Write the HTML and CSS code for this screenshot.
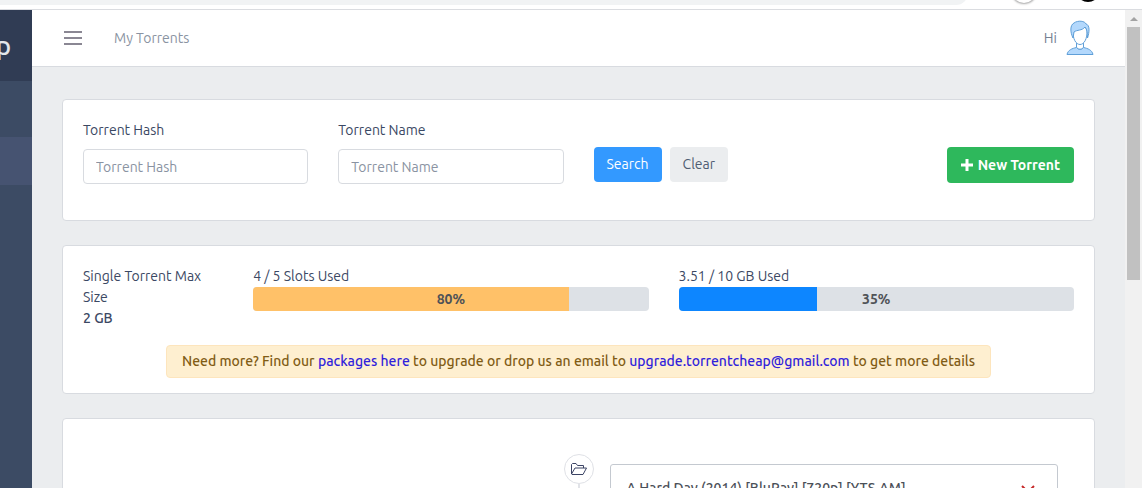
FILE: index.html
```html
<!DOCTYPE html>
<html lang="en">

<head>
  <meta charset="UTF-8">
  <meta name="viewport" content="width=device-width, initial-scale=1.0">
  <title>My Torrents</title>
  <link rel="stylesheet" href="styles.css">
</head>

<body>
  <div class="toolbar">
    <div class="address"></div>
    <div class="tool tool-light"></div>
    <div class="tool tool-dark"></div>
  </div>

  <div class="app">
    <nav class="sidebar">
      <div class="brand">p</div>
      <ul class="menu">
        <li class="title"></li>
        <li class="active"></li>
      </ul>
    </nav>

    <div class="page">
      <header class="header">
        <button type="button" class="toggler" aria-label="Toggle menu">
          <svg width="18" height="14" viewBox="0 0 18 14">
            <path d="M0 1h18M0 7h18M0 13h18" stroke="#8a8793" stroke-width="2" />
          </svg>
        </button>
        <a href="#" class="nav-link">My Torrents</a>
        <a href="#" class="user">
          <span>Hi</span>
          <svg width="28" height="36" viewBox="0 0 28 36">
            <path d="M1 34.500C2 30 6 28.500 10.500 27.500Q14 31 17.500 27.500C22 28.500 26 30 27 34.500Z" fill="#b3d8fc" stroke="#5f9fd8" />
            <path d="M10.500 23v4.500Q14 31 17.500 27.500V23" fill="#fff" stroke="#5f9fd8" />
            <path d="M7 10C6.500 19 10 24.500 14 24.500S21.500 19 21 10L19 7H9Z" fill="#fff" stroke="#5f9fd8" />
            <path d="M7 18C4 12 4 5 8 3C12 0 19 1 20 4C24 5 23.500 12 21.500 18C21.500 13 21 9 19 7C16 11 11 9.500 8 12Z" fill="#b3d8fc" stroke="#5f9fd8" />
          </svg>
        </a>
      </header>

      <main class="content">
        <form class="card row">
          <div class="col-3">
            <label for="hash">Torrent Hash</label>
            <input type="text" id="hash" class="form-control" placeholder="Torrent Hash">
          </div>
          <div class="col-3">
            <label for="name">Torrent Name</label>
            <input type="text" id="name" class="form-control" placeholder="Torrent Name">
          </div>
          <div class="col-6 actions">
            <button type="button" class="btn btn-primary">Search</button>
            <button type="reset" class="btn btn-secondary">Clear</button>
            <button type="button" class="btn btn-success">
              <svg width="12" height="12" viewBox="0 0 12 12">
                <path d="M6 0v12M0 6h12" stroke="#fff" stroke-width="3" />
              </svg>
              New Torrent
            </button>
          </div>
        </form>

        <section class="card usage">
          <div class="row">
            <div class="col-2">
              Single Torrent Max Size<br>
              <span class="medium">2 GB</span>
            </div>
            <div class="col-5">
              <div>4 / 5 Slots Used</div>
              <div class="progress">
                <div class="bar bar-warning" style="width: 80%"></div>
                <b class="percent">80%</b>
              </div>
            </div>
            <div class="col-5">
              <div>3.51 / 10 GB Used</div>
              <div class="progress">
                <div class="bar bar-info" style="width: 35%"></div>
                <b class="percent">35%</b>
              </div>
            </div>
          </div>
          <div class="alert">
            Need more? Find our <a href="#">packages here</a> to upgrade or drop us an email to
            <a href="#">upgrade.torrentcheap@gmail.com</a> to get more details
          </div>
        </section>

        <section class="card timeline">
          <div class="marker">
            <div class="marker-icon">
              <svg width="16" height="12" viewBox="0 0 16 12" fill="none" stroke="#3c4465" stroke-linejoin="round">
                <path d="M.500 11V1.500L1.500.500H5L6.500 2.500H12.500V5" />
                <path d="M.500 11L4 5H15.500L12 11.500H1Z" />
              </svg>
            </div>
          </div>
          <article class="torrent">
            <span>A Hard Day (2014) [BluRay] [720p] [YTS.AM]</span>
            <button type="button" class="remove" aria-label="Remove">
              <svg width="14" height="14" viewBox="0 0 14 14">
                <path d="M1 1l12 12M13 1L1 13" stroke="#c62828" stroke-width="2" />
              </svg>
            </button>
          </article>
        </section>
      </main>
    </div>

    <div class="scrollbar">
      <div class="arrow"></div>
      <div class="thumb"></div>
    </div>
  </div>
</body>

</html>
```
FILE: styles.css
```css
* {
  box-sizing: border-box;
}

body {
  margin: 0;
  height: 100vh;
  display: flex;
  flex-direction: column;
  overflow: hidden;
  font-family: Ubuntu, "Noto Sans", sans-serif;
  font-size: 14px;
  line-height: 21px;
  color: #3b4863;
  background: #fff;
}

a {
  text-decoration: none;
}

svg {
  display: block;
  flex: none;
}

button,
input {
  font: inherit;
}

ul {
  list-style: none;
  margin: 0;
  padding: 0;
}

/* browser toolbar */

.toolbar {
  flex: none;
  display: flex;
  align-items: flex-end;
  height: 10px;
  padding-right: 42px;
  border-bottom: 1px solid #dadce0;
  overflow: hidden;
}

.address {
  flex: 1;
  height: 24px;
  margin-bottom: 4px;
  border-radius: 0 0 12px 0;
  background: #f1f3f4;
}

.tool {
  flex: none;
  width: 24px;
  height: 24px;
  border-radius: 50%;
}

.tool-light {
  margin: 0 40px 6px 44px;
  background: #fff;
  box-shadow: 0 0 2px 1px #aaa;
}

.tool-dark {
  margin-bottom: 7px;
  background: #000;
}

.app {
  flex: 1;
  display: flex;
  min-height: 0;
}

/* sidebar */

.sidebar {
  flex: none;
  width: 32px;
  background: #3c4b64;
}

.brand {
  display: flex;
  align-items: center;
  justify-content: flex-end;
  height: 71px;
  padding-right: 21px;
  font-size: 26px;
  font-weight: 500;
  color: #e4e7ea;
  background: #303c54;
}

.menu .title {
  height: 56px;
}

.menu .active {
  height: 48px;
  background: #465371;
}

/* header */

.page {
  flex: 1;
  min-width: 0;
  overflow: hidden;
  background: #ebedef;
}

.header {
  display: flex;
  align-items: center;
  height: 57px;
  padding: 0 31px 0 32px;
  border-bottom: 1px solid #d8dbe0;
  background: #fff;
}

.toggler {
  padding: 0;
  border: 0;
  background: none;
}

.nav-link {
  margin-left: 32px;
  color: #8a93a2;
}

.user {
  display: flex;
  align-items: center;
  gap: 9px;
  margin-left: auto;
  color: #768192;
}

/* cards */

.content {
  display: flex;
  flex-direction: column;
  gap: 24px;
  padding: 32px 30px;
}

.card {
  padding: 20px;
  border: 1px solid #d8dbe0;
  border-radius: 4px;
  background: #fff;
}

.row {
  display: grid;
  grid-template-columns: repeat(12, 1fr);
  column-gap: 30px;
}

.col-2 {
  grid-column: span 2;
}

.col-3 {
  grid-column: span 3;
}

.col-5 {
  grid-column: span 5;
}

.col-6 {
  grid-column: span 6;
}

form.card {
  padding-bottom: 36px;
}

label {
  display: block;
  margin-bottom: 8px;
}

.form-control {
  display: block;
  width: 100%;
  height: 35px;
  padding: 6px 12px;
  border: 1px solid #d8dbe0;
  border-radius: 4px;
  color: #768192;
}

.form-control::placeholder {
  color: #8a93a2;
}

.actions {
  display: flex;
  align-items: flex-start;
  gap: 8px;
  padding-top: 27px;
}

.btn {
  display: flex;
  align-items: center;
  gap: 5px;
  height: 35px;
  padding: 0 13px;
  border: 0;
  border-radius: 4px;
  white-space: nowrap;
}

.btn-primary {
  color: #fff;
  background: #39f;
}

.btn-secondary {
  color: #4f5d73;
  background: #ebedef;
}

.btn-success {
  height: 36px;
  padding: 0 14px;
  margin-left: auto;
  font-weight: 700;
  color: #fff;
  background: #2eb85c;
}

.medium {
  font-weight: 500;
}

.progress {
  position: relative;
  height: 24px;
  border-radius: 4px;
  overflow: hidden;
  background: #dde1e6;
}

.bar {
  height: 100%;
}

.bar-warning {
  background: #ffc168;
}

.bar-info {
  background: #0d86ff;
}

.percent {
  position: absolute;
  inset: 0;
  line-height: 24px;
  text-align: center;
  color: #4f5257;
}

.usage {
  padding-bottom: 15px;
}

.alert {
  width: calc(100% * 10 / 12);
  margin: 16px auto 0;
  padding: 5px 0;
  border: 1px solid #fde5bd;
  border-radius: 4px;
  text-align: center;
  font-weight: 500;
  color: #815c15;
  background: #feefd0;
}

.alert a {
  color: #321fdb;
}

/* timeline */

.timeline {
  display: grid;
  grid-template-columns: 1fr 30px 1fr;
  column-gap: 16px;
  padding: 35px 36px;
}

.marker {
  grid-column: 2;
  display: flex;
  flex-direction: column;
  align-items: center;
}

.marker::after {
  content: "";
  flex: 1;
  width: 2px;
  background: #e1e3e8;
}

.marker-icon {
  display: flex;
  align-items: center;
  justify-content: center;
  width: 30px;
  height: 30px;
  border: 1px solid #dfe1e6;
  border-radius: 50%;
}

.torrent {
  display: flex;
  justify-content: space-between;
  margin-top: 10px;
  padding: 13px 22px 40px 16px;
  border: 1px solid #c4c9d0;
  border-radius: 3px;
  font-weight: 500;
  color: #4b5058;
}

.remove {
  height: 21px;
  padding: 7px 0 0;
  border: 0;
  background: none;
}

/* scrollbar */

.scrollbar {
  flex: none;
  width: 17px;
  padding: 0 2px;
  background: #f1f1f1;
}

.arrow {
  display: flex;
  align-items: center;
  justify-content: center;
  height: 17px;
}

.arrow::after {
  content: "";
  border: 4px solid transparent;
  border-top: 0;
  border-bottom-color: #a3a3a3;
}

.thumb {
  height: 253px;
  background: #c1c1c1;
}
```
